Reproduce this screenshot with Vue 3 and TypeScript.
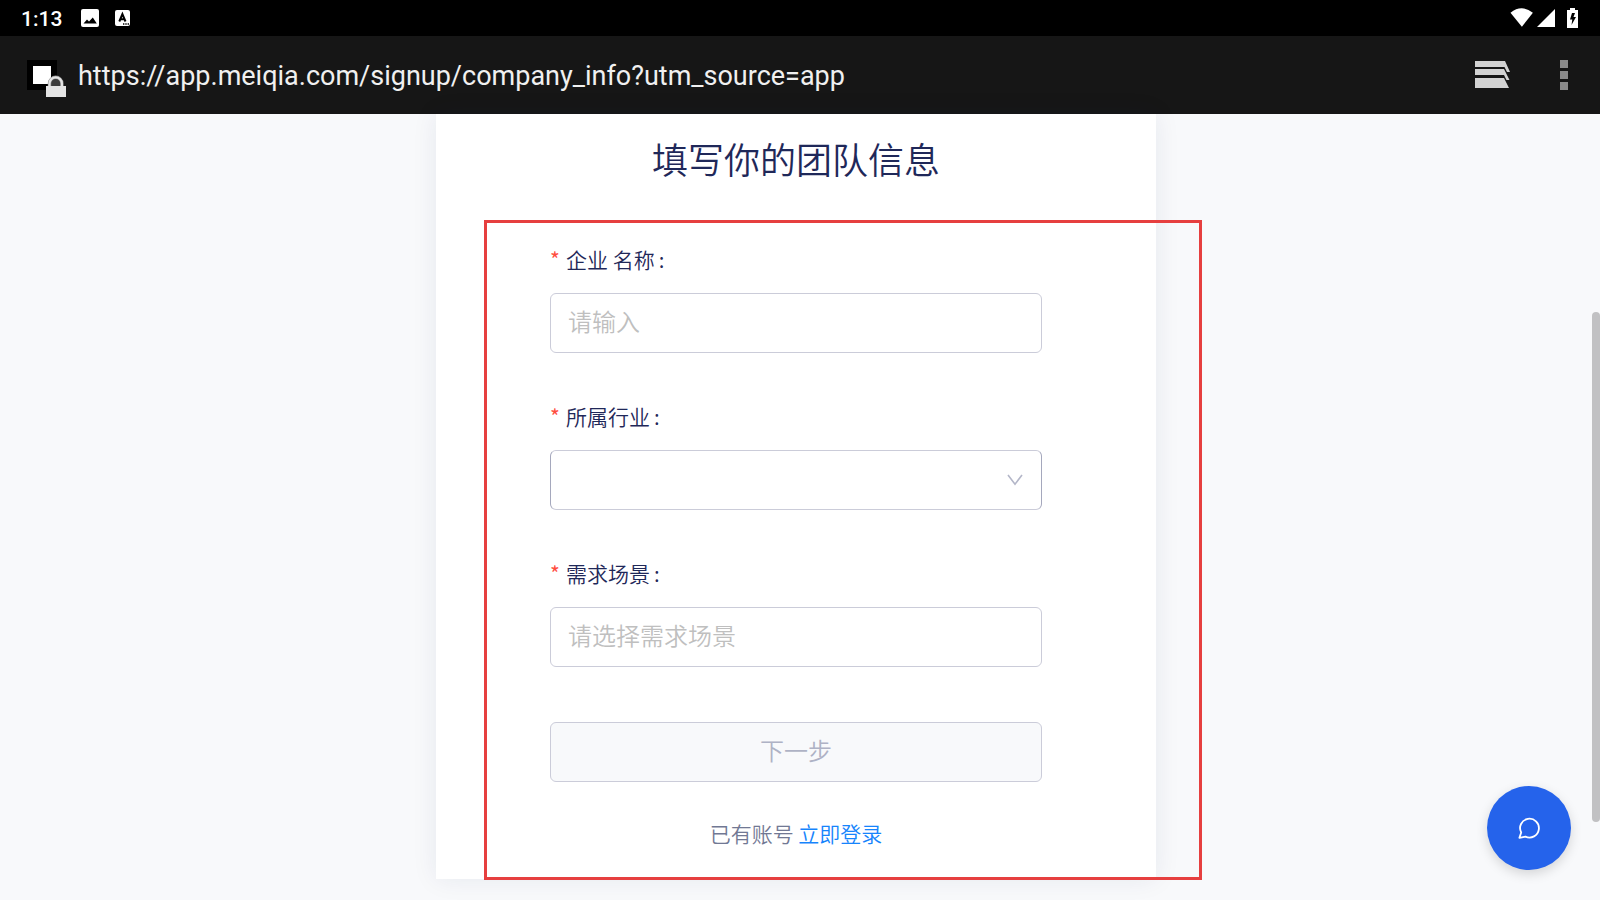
<script setup lang="ts">
import { ref } from 'vue'

const company = ref('')
const industry = ref('')
const scene = ref('')
const address = 'https://app.meiqia.com/signup/company_info?utm_source=app'
</script>

<template>
  <div class="screen">
    <header class="status-bar">
      <span class="clock">1:13</span>
      <svg class="status-icon" width="18" height="18" viewBox="0 0 18 18" aria-hidden="true">
        <rect width="18" height="18" rx="2" fill="#fff" />
        <path d="M2.5 14.5 6 10.500 8 12.5 11.8 8.500 15.8 14.5z" fill="#000" />
      </svg>
      <svg class="status-icon letter-icon" width="16" height="16" viewBox="0 0 16 16" aria-hidden="true">
        <rect width="15" height="16" rx="2" fill="#fff" />
        <path d="M4.300 11.500 7.4 4 10.500 11.500M5.500 9.300h3.800" fill="none" stroke="#000" stroke-width="2" />
        <path d="M8 14h1.4M10.3 14h1.4M12.6 14h1.4" stroke="#000" stroke-width="1.4" />
      </svg>
      <div class="signals">
        <svg width="24" height="20" viewBox="0 0 24 20" aria-hidden="true">
          <path d="M1.500 4.700Q12.700-4.200 23.900 4.700L12.900 18.700z" fill="#fff" />
        </svg>
        <svg width="18" height="18" viewBox="0 0 18 18" aria-hidden="true">
          <path d="M18 0V18H0z" fill="#fff" />
        </svg>
        <svg class="battery" width="11" height="20" viewBox="0 0 11 20" aria-hidden="true">
          <path d="M3 0h5v2h3v18H0V2h3z" fill="#fff" />
          <path d="M5 5h3L6.5 9H9l-4.500 8 .8-5.500H3z" fill="#000" />
        </svg>
      </div>
    </header>

    <div class="address-bar">
      <svg class="site-icon" width="39" height="38" viewBox="0 0 39 38" aria-hidden="true">
        <rect width="30" height="30" fill="#000" />
        <rect x="6" y="6" width="18" height="18" fill="#fff" />
        <path d="M22.500 26.500v-3a6.200 6.200 0 0 1 12.400 0v3z" fill="#3c3c3c" />
        <path d="M22.500 27v-3.500a6.200 6.200 0 0 1 12.400 0V27" fill="none" stroke="#8a8a8a" stroke-width="3.400" />
        <path d="M22.500 27v-3.500a6.200 6.200 0 0 1 12.400 0V27" fill="none" stroke="#e4e4e4" stroke-width="2.200" />
        <rect x="19" y="26" width="20" height="11" fill="#e4e4e4" />
      </svg>
      <span class="address">{{ address }}</span>
      <button class="bar-button tabs" type="button" aria-label="标签页">
        <svg width="36" height="28" viewBox="0 0 36 28" aria-hidden="true">
          <path d="M0 0h30l5 11h-3l-2.500-5H0zM0 8h29l5.500 11h-3l-2.500-5H0zM0 17h29l5 10H0z" fill="#d2d2d2" />
        </svg>
      </button>
      <button class="bar-button" type="button" aria-label="菜单">
        <svg width="8" height="30" viewBox="0 0 8 30" aria-hidden="true">
          <path d="M0 0h8v8H0zM0 11h8v8H0zM0 22h8v8H0z" fill="#8b8b8b" />
        </svg>
      </button>
    </div>

    <main class="page">
      <section class="card">
        <h1>填写你的团队信息</h1>
        <form @submit.prevent>
          <div class="field">
            <label for="company">企业 名称</label>
            <input id="company" v-model="company" class="control" type="text" placeholder="请输入" />
          </div>
          <div class="field">
            <label for="industry">所属行业</label>
            <div class="select-wrap">
              <select id="industry" v-model="industry" class="control">
                <option value=""></option>
              </select>
              <svg class="arrow" width="16" height="12" viewBox="0 0 16 12" aria-hidden="true">
                <path d="M1 1 8 10.200 15 1" fill="none" stroke="#b3b6c8" stroke-width="1.600" />
              </svg>
            </div>
          </div>
          <div class="field">
            <label for="scene">需求场景</label>
            <input id="scene" v-model="scene" class="control" type="text" placeholder="请选择需求场景" />
          </div>
          <button class="control next" type="submit" disabled>下一步</button>
          <p class="login">已有账号 <a href="#login">立即登录</a></p>
        </form>
        <div class="highlight"></div>
      </section>
      <div class="scroll-thumb"></div>
      <button class="chat" type="button" aria-label="在线咨询">
        <svg width="24" height="24" viewBox="0 0 24 24" aria-hidden="true">
          <path
            d="M4.200 16.500a9.400 9.400 0 1 1 4.300 4.100L2.400 21.900z"
            fill="none"
            stroke="#fff"
            stroke-width="1.800"
            stroke-linejoin="round"
          />
        </svg>
      </button>
    </main>
  </div>
</template>

<style>
html,
body {
  margin: 0;
  background: #f8f9fb;
}
</style>

<style scoped>
.screen {
  display: flex;
  flex-direction: column;
  height: 100vh;
  overflow: hidden;
  font-family: "Noto Sans CJK SC", sans-serif;
  font-weight: 350;
}

.screen *,
.screen *::before {
  box-sizing: border-box;
}

svg {
  display: block;
}

button {
  cursor: pointer;
}

.status-bar {
  display: flex;
  flex: none;
  align-items: center;
  height: 36px;
  padding: 0 22px 0 21px;
  background: #000;
}

.clock {
  padding-top: 2px;
  font: 500 21px/34px Roboto, sans-serif;
  color: #fff;
}

.status-icon {
  margin-left: 19px;
}

.letter-icon {
  margin-left: 16px;
}

.signals {
  display: flex;
  align-items: center;
  gap: 4px;
  margin-left: auto;
}

.battery {
  margin-left: 8px;
}

.address-bar {
  display: flex;
  flex: none;
  align-items: center;
  height: 78px;
  padding: 0 32px 0 27px;
  background: #161616;
}

.site-icon {
  flex: none;
  margin-top: 8px;
}

.address {
  flex: 1;
  margin: 2px 0 0 12px;
  font: 400 27px/40px Roboto, sans-serif;
  color: #f0f0f0;
}

.bar-button {
  padding: 0;
  border: 0;
  background: none;
}

.tabs {
  margin: 0 49px 0 0;
}

.page {
  position: relative;
  flex: 1;
  padding-right: 8px;
  background: #f8f9fb;
}

.card {
  position: relative;
  width: 720px;
  margin: 0 auto;
  padding: 17px 114px 30px;
  background: #fff;
  box-shadow: 0 0 24px rgba(30, 40, 90, 0.08);
}

h1 {
  margin: 0 0 60px;
  font-size: 36px;
  font-weight: inherit;
  line-height: 54px;
  text-align: center;
  color: #1f2859;
}

.field {
  margin-bottom: 49px;
}

label {
  display: block;
  margin-bottom: 20px;
  font-size: 21px;
  line-height: 28px;
  color: #1f2859;
}

label::before {
  content: "*";
  display: inline-block;
  width: 16px;
  font-weight: 400;
  color: #ff4d3f;
}

label::after {
  content: ":";
  margin-left: 4px;
}

.control {
  display: block;
  width: 100%;
  height: 60px;
  padding: 0 17px 6px;
  border: 1px solid #cbccd9;
  border-radius: 6px;
  background: #fff;
  font-family: inherit;
  font-size: 24px;
  font-weight: inherit;
  color: #1f2859;
}

.control::placeholder {
  color: #bfbfbf;
  opacity: 1;
}

.select-wrap {
  position: relative;
}

select.control {
  appearance: none;
  border-right-color: #a5a8bd;
  border-left-color: #a5a8bd;
}

.arrow {
  position: absolute;
  top: 24px;
  right: 19px;
  pointer-events: none;
}

.next {
  margin-top: 55px;
  background: #f8f9fb;
  text-align: center;
  color: #aeb2c5;
}

.login {
  margin: 36px 0 0;
  padding-bottom: 1px;
  font-size: 21px;
  line-height: 30px;
  text-align: center;
  color: #717894;
}

.login a {
  color: #1684fc;
  text-decoration: none;
}

.highlight {
  position: absolute;
  top: 106px;
  right: -46px;
  bottom: -1px;
  left: 48px;
  border: 3px solid #e63f3f;
  pointer-events: none;
}

.scroll-thumb {
  position: absolute;
  top: 198px;
  right: 0;
  width: 8px;
  height: 510px;
  border-radius: 4px;
  background: #c1c1c3;
}

.chat {
  position: absolute;
  right: 29px;
  bottom: 30px;
  display: flex;
  align-items: center;
  justify-content: center;
  width: 84px;
  height: 84px;
  padding: 0;
  border: 0;
  border-radius: 50%;
  background: #2563eb;
  box-shadow: 0 4px 12px rgba(0, 0, 0, 0.15);
}
</style>
